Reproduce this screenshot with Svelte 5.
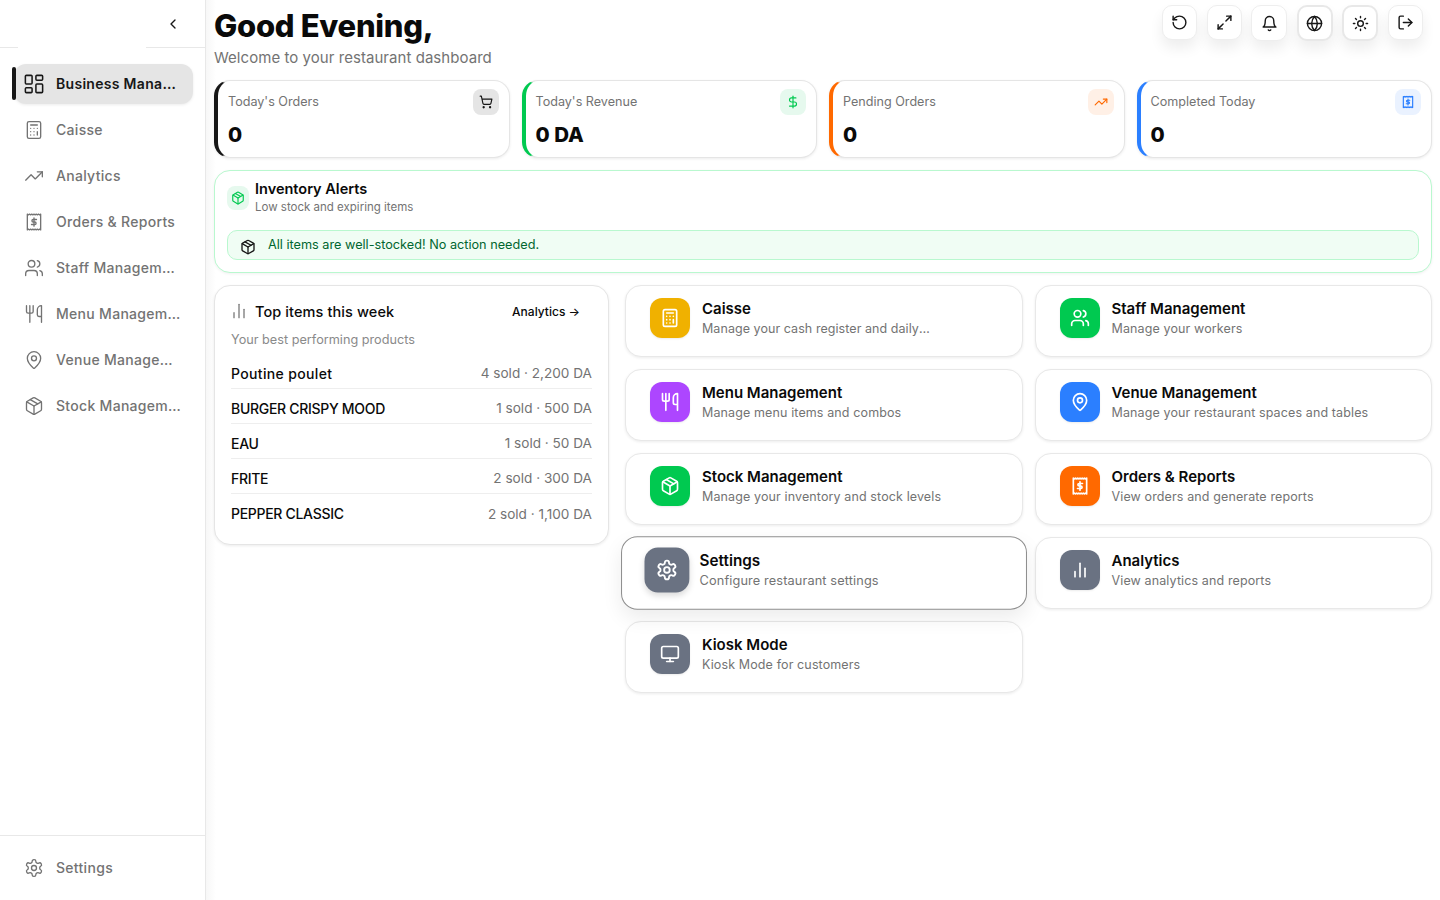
<script>
	const icons = {
		dashboard:
			'<rect width="7" height="9" x="3" y="3" rx="1"/><rect width="7" height="5" x="14" y="3" rx="1"/><rect width="7" height="9" x="14" y="12" rx="1"/><rect width="7" height="5" x="3" y="16" rx="1"/>',
		calculator:
			'<rect width="16" height="20" x="4" y="2" rx="2"/><line x1="8" x2="16" y1="6" y2="6"/><line x1="16" x2="16" y1="14" y2="18"/><path d="M16 10h.01M12 10h.01M8 10h.01M12 14h.01M8 14h.01M12 18h.01M8 18h.01"/>',
		trending: '<polyline points="22 7 13.5 15.5 8.5 10.5 2 17"/><polyline points="16 7 22 7 22 13"/>',
		receipt:
			'<path d="M4 2.5l1.33 1 1.33-1 1.33 1 1.33-1 1.33 1 1.35-1 1.33 1 1.33-1 1.33 1 1.33-1 1.33 1 1.33-1v19l-1.33-1-1.33 1-1.33-1-1.33 1-1.33-1-1.33 1-1.35-1-1.33 1-1.33-1-1.33 1-1.33-1-1.33 1z"/><path d="M12 7v10M15 9h-4a1.5 1.5 0 0 0 0 3h2a1.5 1.5 0 0 1 0 3H9"/>',
		users:
			'<path d="M16 21v-2a4 4 0 0 0-4-4H6a4 4 0 0 0-4 4v2"/><circle cx="9" cy="7" r="4"/><path d="M22 21v-2a4 4 0 0 0-3-3.87"/><path d="M16 3.13a4 4 0 0 1 0 7.75"/>',
		utensils:
			'<path d="M3 2v7c0 1.1.9 2 2 2h4a2 2 0 0 0 2-2V2"/><path d="M7 2v20"/><path d="M21 15V2a5 5 0 0 0-5 5v6c0 1.1.9 2 2 2h3Zm0 0v7"/>',
		pin: '<path d="M20 10c0 4.993-5.539 10.193-7.399 11.799a1 1 0 0 1-1.202 0C9.539 20.193 4 14.993 4 10a8 8 0 0 1 16 0"/><circle cx="12" cy="10" r="3"/>',
		package:
			'<path d="M11 21.73a2 2 0 0 0 2 0l7-4A2 2 0 0 0 21 16V8a2 2 0 0 0-1-1.73l-7-4a2 2 0 0 0-2 0l-7 4A2 2 0 0 0 3 8v8a2 2 0 0 0 1 1.73z"/><path d="M12 22V12"/><polyline points="3.29 7 12 12 20.71 7"/><path d="m7.5 4.27 9 5.15"/>',
		settings:
			'<path d="M12.22 2h-.44a2 2 0 0 0-2 2v.18a2 2 0 0 1-1 1.73l-.43.25a2 2 0 0 1-2 0l-.15-.08a2 2 0 0 0-2.73.73l-.22.38a2 2 0 0 0 .73 2.73l.15.1a2 2 0 0 1 1 1.72v.51a2 2 0 0 1-1 1.74l-.15.09a2 2 0 0 0-.73 2.73l.22.38a2 2 0 0 0 2.73.73l.15-.08a2 2 0 0 1 2 0l.43.25a2 2 0 0 1 1 1.73V20a2 2 0 0 0 2 2h.44a2 2 0 0 0 2-2v-.18a2 2 0 0 1 1-1.73l.43-.25a2 2 0 0 1 2 0l.15.08a2 2 0 0 0 2.73-.73l.22-.39a2 2 0 0 0-.73-2.73l-.15-.08a2 2 0 0 1-1-1.74v-.5a2 2 0 0 1 1-1.74l.15-.09a2 2 0 0 0 .73-2.73l-.22-.38a2 2 0 0 0-2.73-.73l-.15.08a2 2 0 0 1-2 0l-.43-.25a2 2 0 0 1-1-1.73V4a2 2 0 0 0-2-2z"/><circle cx="12" cy="12" r="3"/>',
		dollar: '<line x1="12" x2="12" y1="2" y2="22"/><path d="M17 5H9.5a3.5 3.5 0 0 0 0 7h5a3.5 3.5 0 0 1 0 7H6"/>',
		cart: '<circle cx="8" cy="21" r="1"/><circle cx="19" cy="21" r="1"/><path d="M2.05 2.05h2l2.66 12.42a2 2 0 0 0 2 1.58h9.78a2 2 0 0 0 1.95-1.57l1.65-7.43H5.12"/>',
		rotate: '<path d="M3 12a9 9 0 1 0 9-9 9.75 9.75 0 0 0-6.74 2.74L3 8"/><path d="M3 3v5h5"/>',
		expand:
			'<polyline points="15 3 21 3 21 9"/><polyline points="9 21 3 21 3 15"/><line x1="21" x2="14" y1="3" y2="10"/><line x1="3" x2="10" y1="21" y2="14"/>',
		bell: '<path d="M6 8a6 6 0 0 1 12 0c0 7 3 9 3 9H3s3-2 3-9"/><path d="M10.3 21a1.94 1.94 0 0 0 3.4 0"/>',
		globe: '<circle cx="12" cy="12" r="10"/><path d="M12 2a14.5 14.5 0 0 0 0 20 14.5 14.5 0 0 0 0-20"/><path d="M2 12h20"/>',
		sun: '<circle cx="12" cy="12" r="4"/><path d="M12 2v2M12 20v2M4.93 4.93l1.41 1.41M17.66 17.66l1.41 1.41M2 12h2M20 12h2M6.34 17.66l-1.41 1.41M19.07 4.93l-1.41 1.41"/>',
		logout: '<path d="M9 21H5a2 2 0 0 1-2-2V5a2 2 0 0 1 2-2h4"/><polyline points="16 17 21 12 16 7"/><line x1="21" x2="9" y1="12" y2="12"/>',
		chart: '<line x1="18" x2="18" y1="20" y2="10"/><line x1="12" x2="12" y1="20" y2="4"/><line x1="6" x2="6" y1="20" y2="14"/>',
		monitor: '<rect width="20" height="14" x="2" y="3" rx="2"/><line x1="8" x2="16" y1="21" y2="21"/><line x1="12" x2="12" y1="17" y2="21"/>',
		chevron: '<path d="m15 18-6-6 6-6"/>'
	};

	const navItems = [
		{ label: 'Business Management', icon: 'dashboard', active: true },
		{ label: 'Caisse', icon: 'calculator' },
		{ label: 'Analytics', icon: 'trending' },
		{ label: 'Orders & Reports', icon: 'receipt' },
		{ label: 'Staff Management', icon: 'users' },
		{ label: 'Menu Management', icon: 'utensils' },
		{ label: 'Venue Management', icon: 'pin' },
		{ label: 'Stock Management', icon: 'package' }
	];

	const toolbar = [
		{ icon: 'rotate' },
		{ icon: 'expand' },
		{ icon: 'bell', cls: 'bell' },
		{ icon: 'globe', cls: 'ring' },
		{ icon: 'sun', cls: 'ring' },
		{ icon: 'logout' }
	];

	const stats = [
		{ label: "Today's Orders", value: '0', icon: 'cart', tone: 'dark' },
		{ label: "Today's Revenue", value: '0 DA', icon: 'dollar', tone: 'green' },
		{ label: 'Pending Orders', value: '0', icon: 'trending', tone: 'orange' },
		{ label: 'Completed Today', value: '0', icon: 'receipt', tone: 'blue' }
	];

	const topItems = [
		{ name: 'Poutine poulet', info: '4 sold · 2,200 DA' },
		{ name: 'BURGER CRISPY MOOD', info: '1 sold · 500 DA' },
		{ name: 'EAU', info: '1 sold · 50 DA' },
		{ name: 'FRITE', info: '2 sold · 300 DA' },
		{ name: 'PEPPER CLASSIC', info: '2 sold · 1,100 DA' }
	];

	const actions = [
		{ title: 'Caisse', desc: 'Manage your cash register and daily operations', icon: 'calculator', color: '#f0b100', clip: true },
		{ title: 'Staff Management', desc: 'Manage your workers', icon: 'users', color: '#00c950' },
		{ title: 'Menu Management', desc: 'Manage menu items and combos', icon: 'utensils', color: '#ad46ff' },
		{ title: 'Venue Management', desc: 'Manage your restaurant spaces and tables', icon: 'pin', color: '#2b7fff' },
		{ title: 'Stock Management', desc: 'Manage your inventory and stock levels', icon: 'package', color: '#00c950' },
		{ title: 'Orders & Reports', desc: 'View orders and generate reports', icon: 'receipt', color: '#ff6900' },
		{ title: 'Settings', desc: 'Configure restaurant settings', icon: 'settings', color: '#6a7282', hover: true },
		{ title: 'Analytics', desc: 'View analytics and reports', icon: 'chart', color: '#6a7282' },
		{ title: 'Kiosk Mode', desc: 'Kiosk Mode for customers', icon: 'monitor', color: '#6a7282' }
	];
</script>

{#snippet icon(name, size = 20, sw = 2)}
	<svg
		width={size}
		height={size}
		viewBox="0 0 24 24"
		fill="none"
		stroke="currentColor"
		stroke-width={sw}
		stroke-linecap="round"
		stroke-linejoin="round"
	>
		{@html icons[name]}
	</svg>
{/snippet}

<div class="shell">
	<aside class="sidebar">
		<div class="side-head">
			<div class="logo-slot"></div>
			<button class="collapse">{@render icon('chevron', 16)}</button>
		</div>
		<nav class="nav">
			{#each navItems as item}
				<div class="nav-item" class:active={item.active}>
					{@render icon(item.icon, 20, 1.6)}
					<span class="nav-label">{item.label}</span>
				</div>
			{/each}
		</nav>
		<div class="side-foot">
			<div class="nav-item">
				{@render icon('settings', 20, 1.6)}
				<span class="nav-label">Settings</span>
			</div>
		</div>
	</aside>

	<main class="main">
		<header class="top">
			<div>
				<h1>Good Evening,</h1>
				<p class="welcome">Welcome to your restaurant dashboard</p>
			</div>
			<div class="tools">
				{#each toolbar as t}
					<button class="tool {t.cls ?? ''}">{@render icon(t.icon, 17)}</button>
				{/each}
			</div>
		</header>

		<section class="stats">
			{#each stats as s}
				<div class="stat {s.tone}">
					<div>
						<div class="stat-label">{s.label}</div>
						<div class="stat-value">{s.value}</div>
					</div>
					<div class="stat-chip">{@render icon(s.icon, 14)}</div>
				</div>
			{/each}
		</section>

		<section class="inventory">
			<div class="inv-head">
				<div class="inv-chip">{@render icon('package', 14)}</div>
				<div>
					<div class="inv-title">Inventory Alerts</div>
					<div class="inv-sub">Low stock and expiring items</div>
				</div>
			</div>
			<div class="inv-ok">
				{@render icon('package', 16)}
				<span>All items are well-stocked! No action needed.</span>
			</div>
		</section>

		<section class="lower">
			<div class="top-items">
				<div class="ti-head">
					<div class="ti-title">
						<span class="ti-icon">{@render icon('chart', 20, 1.5)}</span>
						Top items this week
					</div>
					<span class="ti-link">Analytics →</span>
				</div>
				<p class="ti-sub">Your best performing products</p>
				<div class="ti-rows">
					{#each topItems as row}
						<div class="ti-row">
							<span class="ti-name" class:caps={row.name === row.name.toUpperCase()}>{row.name}</span>
							<span class="ti-info">{row.info}</span>
						</div>
					{/each}
				</div>
			</div>

			<div class="actions">
				{#each actions as a}
					<div class="action" class:hover={a.hover}>
						<div class="action-icon" style="background: {a.color}">{@render icon(a.icon, 20)}</div>
						<div class="action-text">
							<div class="action-title">{a.title}</div>
							<div class="action-desc" class:clip={a.clip}>{a.desc}</div>
						</div>
					</div>
				{/each}
			</div>
		</section>
	</main>
</div>

<style>
	:global(body) {
		font-family: Inter, 'Noto Sans', sans-serif;
		background: #fff;
		color: #0a0a0a;
	}

	.shell {
		display: flex;
		height: 900px;
		overflow: hidden;
	}

	.sidebar {
		width: 205px;
		flex-shrink: 0;
		border-right: 1px solid #e8e8e8;
		display: flex;
		flex-direction: column;
		background: #fff;
	}

	.side-head {
		height: 47px;
		border-bottom: 1px solid #e8e8e8;
		display: flex;
		justify-content: space-between;
		align-items: flex-start;
		padding-left: 18px;
		padding-right: 24px;
	}

	.logo-slot {
		width: 128px;
		height: 48px;
		background: #fff;
	}

	.collapse {
		border: 0;
		background: none;
		padding: 0;
		margin-top: 16px;
		color: #171717;
		display: flex;
	}

	.nav {
		flex: 1;
		padding: 16px 12px 0 14px;
		display: flex;
		flex-direction: column;
		gap: 6px;
	}

	.nav-item {
		position: relative;
		height: 40px;
		display: flex;
		align-items: center;
		gap: 12px;
		padding: 0 10px;
		border-radius: 12px;
		color: #737373;
		font-size: 14px;
		font-weight: 500;
		min-width: 0;
	}

	.nav-item svg {
		flex-shrink: 0;
	}

	.nav-label {
		overflow: hidden;
		white-space: nowrap;
		text-overflow: ellipsis;
		letter-spacing: 0.3px;
		padding-bottom: 2px;
	}

	.nav-item.active {
		background: #e5e5e5;
		color: #171717;
		font-weight: 600;
		box-shadow: 0 1px 3px rgb(0 0 0 / 8%);
	}

	.nav-item.active svg {
		transform: scale(1.15);
	}

	.nav-item.active::before {
		content: '';
		position: absolute;
		left: -2px;
		top: 3px;
		bottom: 4px;
		width: 4px;
		border-radius: 3px;
		background: #171717;
	}

	.side-foot {
		border-top: 1px solid #e8e8e8;
		box-sizing: border-box;
		padding: 12px 12px 0 14px;
		height: 65px;
	}

	.main {
		flex: 1;
		min-width: 0;
		padding: 5px 8px 0;
		background: linear-gradient(to right, #f7f7f7, #fff 10px);
	}

	.top {
		display: flex;
		justify-content: space-between;
		align-items: flex-start;
		height: 75px;
	}

	h1 {
		margin: 1px 0 0;
		font-size: 31px;
		line-height: 40px;
		font-weight: 800;
		letter-spacing: -0.3px;
	}

	.welcome {
		margin: 2px 0 0;
		font-size: 15px;
		line-height: 20px;
		letter-spacing: 0.05px;
		color: #737373;
	}

	.tools {
		display: flex;
		align-items: flex-start;
		gap: 9.6px;
		padding-right: 9px;
	}

	.tool {
		width: 35px;
		height: 35px;
		border: 1px solid #eee;
		border-radius: 10px;
		background: #fff;
		color: #171717;
		display: flex;
		align-items: center;
		justify-content: center;
		padding: 0;
		box-shadow: 0 8px 14px rgb(0 0 0 / 7%);
	}

	.tool.bell {
		width: 36px;
		height: 36px;
	}

	.tool.ring {
		width: 36px;
		height: 36px;
		border: 2px solid #e8e8e8;
	}

	.stats {
		display: grid;
		grid-template-columns: repeat(4, 1fr);
		gap: 12px;
	}

	.stat {
		height: 78px;
		box-sizing: border-box;
		background: #fff;
		border: 1px solid #e5e5e5;
		border-left-width: 4px;
		border-radius: 16px;
		padding: 8px 10px 0 10px;
		display: flex;
		justify-content: space-between;
		box-shadow: 0 1px 3px rgb(0 0 0 / 8%);
	}

	.stat.dark {
		border-left-color: #171717;
	}

	.stat.green {
		border-left-color: #00c950;
	}

	.stat.orange {
		border-left-color: #ff6900;
	}

	.stat.blue {
		border-left-color: #2b7fff;
	}

	.stat-label {
		font-size: 12.6px;
		line-height: 18px;
		margin-top: 4px;
		color: #737373;
	}

	.stat-value {
		font-size: 20.5px;
		line-height: 28px;
		margin-top: 10px;
		font-weight: 800;
	}

	.stat-chip {
		width: 26px;
		height: 26px;
		border-radius: 8px;
		display: flex;
		align-items: center;
		justify-content: center;
	}

	.dark .stat-chip {
		background: #e5e5e5;
		color: #171717;
	}

	.green .stat-chip {
		background: #e6f9ee;
		color: #00c950;
	}

	.orange .stat-chip {
		background: #fff0e6;
		color: #ff6900;
	}

	.blue .stat-chip {
		background: #eaf2ff;
		color: #2b7fff;
	}

	.inventory {
		margin-top: 12px;
		height: 103px;
		box-sizing: border-box;
		border: 1px solid #b9f8cf;
		border-radius: 16px;
		padding: 9px 12px 0;
		background: #fff;
		box-shadow: 0 1px 3px rgb(0 0 0 / 6%);
	}

	.inv-head {
		display: flex;
		align-items: center;
		gap: 6px;
	}

	.inv-chip {
		width: 22px;
		height: 24px;
		border-radius: 8px;
		background: #e6f9ee;
		color: #00c950;
		display: flex;
		align-items: center;
		justify-content: center;
	}

	.inv-title {
		font-size: 14.5px;
		line-height: 18px;
		font-weight: 600;
	}

	.inv-sub {
		margin-top: 1px;
		font-size: 11.5px;
		line-height: 16px;
		color: #737373;
	}

	.inv-ok {
		margin-top: 15px;
		height: 30px;
		box-sizing: border-box;
		border: 1px solid #b9f8cf;
		border-radius: 10px;
		background: #f0fdf4;
		display: flex;
		align-items: center;
		gap: 12px;
		padding: 0 12px 1px;
		font-size: 12.7px;
		color: #016630;
	}

	.inv-ok svg {
		color: #171717;
		margin-top: 5px;
	}

	.lower {
		margin-top: 12px;
		display: grid;
		grid-template-columns: 395px 1fr;
		gap: 16px;
		align-items: start;
	}

	.top-items {
		height: 260px;
		box-sizing: border-box;
		border: 1px solid #e5e5e5;
		border-radius: 16px;
		padding: 15px 16px 0;
		background: #fff;
		box-shadow: 0 1px 3px rgb(0 0 0 / 8%);
	}

	.ti-head {
		display: flex;
		justify-content: space-between;
		align-items: center;
		height: 20px;
		padding-right: 12px;
	}

	.ti-title {
		display: flex;
		align-items: center;
		gap: 6px;
		font-size: 14.5px;
		font-weight: 500;
		letter-spacing: 0.1px;
	}

	.ti-icon {
		display: flex;
		margin-left: -2px;
		color: #737373;
	}

	.ti-link {
		font-size: 12px;
		font-weight: 500;
	}

	.ti-sub {
		margin: 10px 0 0;
		font-size: 12.7px;
		line-height: 18px;
		color: #8a8a8a;
	}

	.ti-rows {
		margin-top: 5px;
	}

	.ti-row {
		height: 35px;
		box-sizing: border-box;
		padding-top: 4px;
		display: flex;
		justify-content: space-between;
		align-items: center;
		font-size: 14px;
		border-bottom: 1px solid #eee;
	}

	.ti-row:last-child {
		border-bottom: 0;
	}

	.ti-name {
		font-weight: 500;
		letter-spacing: 0.35px;
	}

	.ti-name.caps {
		letter-spacing: -0.3px;
	}

	.ti-info {
		font-size: 13.6px;
		color: #737373;
	}

	.actions {
		display: grid;
		grid-template-columns: 1fr 1fr;
		gap: 12px;
		align-content: start;
	}

	.action {
		height: 72px;
		box-sizing: border-box;
		background: #fff;
		border: 1px solid #e8e8e8;
		border-radius: 16px;
		display: flex;
		align-items: flex-start;
		gap: 12px;
		padding: 12px 24px 0;
		min-width: 0;
		box-shadow: 0 1px 3px rgb(0 0 0 / 8%);
	}

	.action.hover {
		transform: scale(1.02);
		border-color: #8e8e8e;
		box-shadow: 0 8px 20px rgb(0 0 0 / 8%);
	}

	.action-icon {
		width: 40px;
		height: 40px;
		flex-shrink: 0;
		border-radius: 12px;
		color: #fff;
		display: flex;
		align-items: center;
		justify-content: center;
		box-shadow: 0 1px 2px rgb(0 0 0 / 8%);
	}

	.action.hover .action-icon {
		transform: scale(1.1);
		box-shadow: 0 3px 6px rgb(0 0 0 / 15%);
	}

	.action-text {
		min-width: 0;
		padding-top: 1px;
	}

	.action-title {
		font-size: 15px;
		line-height: 20px;
		font-weight: 600;
	}

	.action-desc {
		margin-top: 1px;
		font-size: 12.5px;
		line-height: 18px;
		letter-spacing: 0.12px;
		color: #737373;
		white-space: nowrap;
	}

	.action-desc.clip {
		max-width: 230px;
		letter-spacing: 0.06px;
		overflow: hidden;
		text-overflow: ellipsis;
	}
</style>
